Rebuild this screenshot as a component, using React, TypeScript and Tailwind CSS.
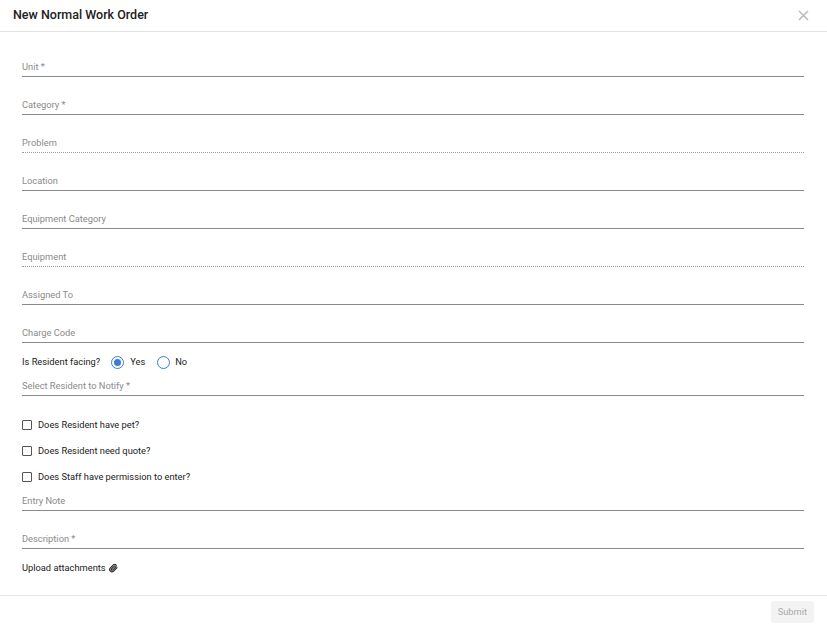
import React from "react";

function Field({ label, dotted, h = "h-[38px]" }: { label: string; dotted?: boolean; h?: string }) {
  return (
    <div
      className={`${h} flex items-end border-b ${
        dotted ? "border-dotted border-[#9e9e9e]" : "border-[#8a8a8a]"
      }`}
    >
      <span className="text-[9.3px] leading-none pb-[5px] text-[#8a8a8a]">{label}</span>
    </div>
  );
}

function Check({ label }: { label: string }) {
  return (
    <div className="h-[26px] flex items-center gap-[6px]">
      <span className="w-[10px] h-[10px] border border-[#555] rounded-[1px] bg-white" />
      <span className="text-[9.3px] text-[#222]">{label}</span>
    </div>
  );
}

export default function App() {
  return (
    <div
      className="w-[827px] h-[627px] bg-white flex flex-col"
      style={{ fontFamily: "Roboto, 'Liberation Sans', sans-serif" }}
    >
      <div className="h-[32px] border-b border-[#e3e3e3] flex items-center justify-between pl-[13px] pr-[18px]">
        <span className="text-[12.5px] font-medium text-[#212121]">New Normal Work Order</span>
        <svg width="11" height="11" viewBox="0 0 11 11" className="text-[#bdbdbd]">
          <path d="M1 1L10 10M10 1L1 10" stroke="currentColor" strokeWidth="1.6" />
        </svg>
      </div>

      <div className="flex-1 px-[22px] pr-[23px] pt-[7px]">
        <Field label="Unit *" />
        <Field label="Category *" />
        <Field label="Problem" dotted />
        <Field label="Location" />
        <Field label="Equipment Category" />
        <Field label="Equipment" dotted />
        <Field label="Assigned To" />
        <Field label="Charge Code" />

        <div className="h-[38px] flex items-center text-[9.3px] text-[#222]">
          <span>Is Resident facing?</span>
          <span className="ml-[11px] w-[13px] h-[13px] rounded-full border border-[#3b7dd8] flex items-center justify-center">
            <span className="w-[7px] h-[7px] rounded-full bg-[#3b7dd8]" />
          </span>
          <span className="ml-[6px]">Yes</span>
          <span className="ml-[12px] w-[13px] h-[13px] rounded-full border border-[#3b7dd8]" />
          <span className="ml-[5px]">No</span>
        </div>
        <Field label="Select Resident to Notify *" h="h-[15px]" />

        <div className="pt-[16px]">
          <Check label="Does Resident have pet?" />
          <Check label="Does Resident need quote?" />
          <Check label="Does Staff have permission to enter?" />
        </div>

        <Field label="Entry Note" h="h-[21px]" />
        <Field label="Description *" />

        <div className="h-[38px] flex items-center gap-[3px] text-[9.3px] text-[#222]">
          <span>Upload attachments</span>
          <svg width="9" height="10" viewBox="0 0 24 24" fill="none" stroke="#222" strokeWidth="3" strokeLinecap="round" strokeLinejoin="round">
            <path d="m21.44 11.05-9.19 9.19a6 6 0 0 1-8.49-8.49l8.57-8.57A4 4 0 1 1 18 8.84l-8.59 8.57a2 2 0 0 1-2.83-2.83l8.49-8.48" />
          </svg>
        </div>
      </div>

      <div className="h-[32px] border-t border-[#e3e3e3] flex items-center justify-end pr-[13px]">
        <button className="h-[22px] px-[7px] rounded-[3px] bg-[#f3f3f3] text-[9.3px] text-[#aaa]">Submit</button>
      </div>
    </div>
  );
}
